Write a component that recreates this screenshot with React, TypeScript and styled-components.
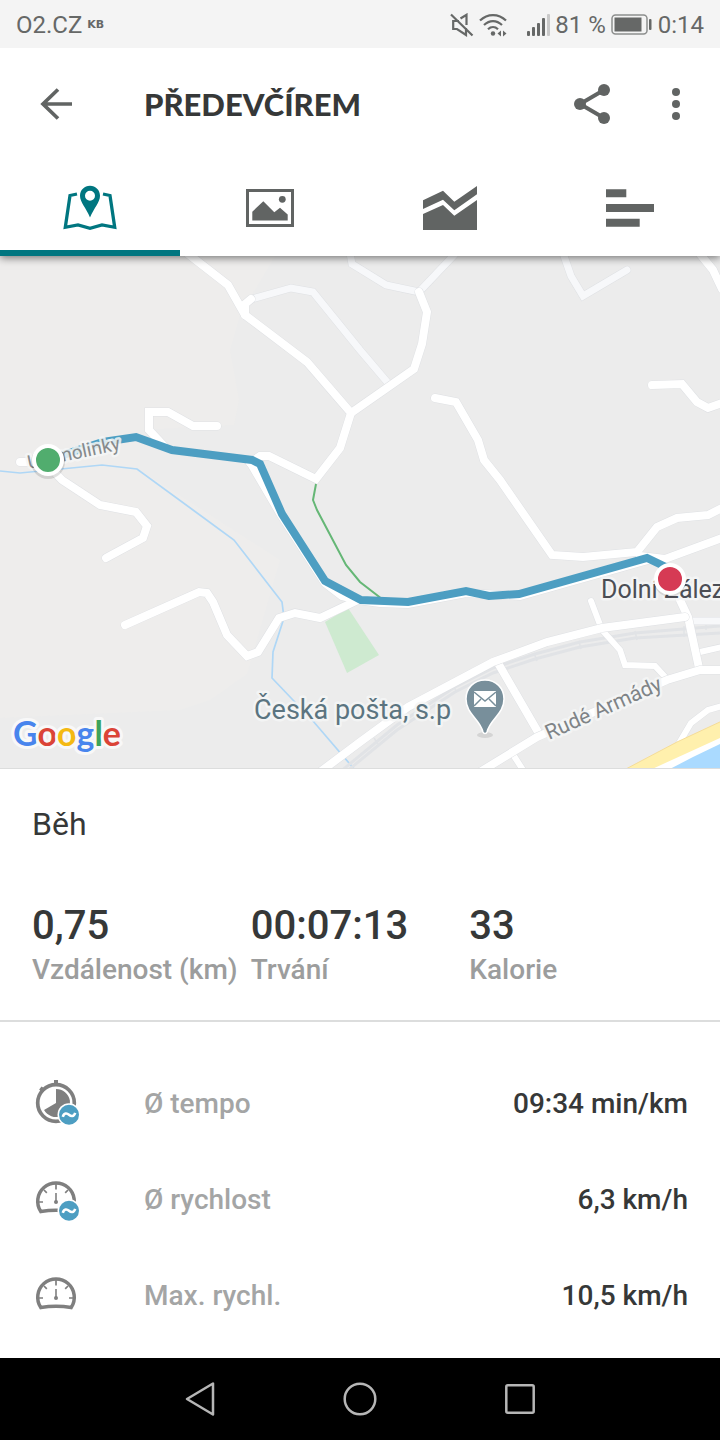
import React from 'react';
import styled, { createGlobalStyle } from 'styled-components';

const color = {
  teal: '#007680',
  icon: '#616463',
  status: '#666867',
  text: '#363838',
  label: '#9c9d9d',
  route: '#4d9ec2',
  rule: '#dcdddd',
};

const GlobalStyle = createGlobalStyle`
  *, *::before, *::after { box-sizing: border-box; }
  body { margin: 0; background: #fff; font-family: Roboto, "Liberation Sans", sans-serif; }
  button { border: 0; padding: 0; background: none; font: inherit; cursor: pointer; }
  svg { display: block; flex: none; }
`;

const Screen = styled.div`
  display: flex;
  flex-direction: column;
  min-height: 100vh;
  color: ${color.text};
`;

const StatusBar = styled.div`
  position: relative;
  z-index: 1;
  display: flex;
  align-items: center;
  justify-content: space-between;
  height: 48px;
  padding: 2px 16px 0;
  background: #f4f4f4;
  color: ${color.status};
  font-size: 24px;
  line-height: 40px;
`;

const StatusGroup = styled.div`
  display: flex;
  align-items: center;
  gap: 5px;
  white-space: nowrap;
`;

const DataUnit = styled.span`
  font: 700 11px/40px "DejaVu Sans", sans-serif;
`;

const Signal = styled.span`
  display: flex;
  padding-left: 14px;
`;

const Top = styled.header`
  position: relative;
  background: #fff;
  box-shadow: 0 2px 8px rgba(0, 0, 0, 0.5);
`;

const Toolbar = styled.div`
  display: flex;
  align-items: center;
  gap: 20px;
  height: 112px;
  padding: 0 12px 0 24px;
`;

const IconButton = styled.button`
  display: flex;
  align-items: center;
  justify-content: center;
  width: 64px;
  height: 64px;
`;

const Title = styled.h1`
  flex: 1;
  margin: 0;
  padding-left: 36px;
  font: 900 31px/40px Lato, sans-serif;
`;

const Tabs = styled.nav`
  display: grid;
  grid-template-columns: repeat(4, 1fr);
`;

const Tab = styled.button<{ $active?: boolean }>`
  display: flex;
  align-items: center;
  justify-content: center;
  height: 96px;
  color: ${(p) => (p.$active ? color.teal : color.icon)};
  box-shadow: ${(p) => (p.$active ? `inset 0 -6px ${color.teal}` : 'none')};
`;

const MapArea = styled.section`
  border-bottom: 1px solid ${color.rule};
`;

const MapCanvas = styled.svg`
  width: 100%;
  height: 512px;
  background: #ececec;
`;

const MapText = styled.text<{ $size: number; $fill: string }>`
  font-family: Roboto, sans-serif;
  font-size: ${(p) => p.$size}px;
  fill: ${(p) => p.$fill};
  stroke: rgba(245, 246, 246, 0.85);
  stroke-width: 5px;
  stroke-linejoin: round;
  paint-order: stroke;
`;

const Wordmark = styled.text`
  font-family: Lato, sans-serif;
  font-size: 34px;
  font-weight: 700;
  stroke: #f8f8f8;
  stroke-width: 6px;
  stroke-linejoin: round;
  paint-order: stroke;
`;

const Summary = styled.section`
  padding: 35px 32px 30px;
  border-bottom: 2px solid ${color.rule};
`;

const Activity = styled.h2`
  margin: 0;
  font-size: 32px;
  line-height: 40px;
  font-weight: 400;
`;

const Stats = styled.dl`
  display: grid;
  grid-template-columns: repeat(3, 1fr);
  margin: 58px 0 0;
`;

const Stat = styled.div`
  display: flex;
  flex-direction: column-reverse;
  font-weight: 500;
  white-space: nowrap;
`;

const StatValue = styled.dd`
  margin: 0;
  font-size: 40px;
  line-height: 48px;
`;

const StatLabel = styled.dt`
  color: ${color.label};
  font-size: 28px;
  line-height: 40px;
`;

const Details = styled.dl`
  flex: 1;
  margin: 0;
  padding: 34px 32px 14px;
`;

const DetailRow = styled.div`
  display: grid;
  grid-template-columns: 112px 1fr auto;
  align-items: center;
  height: 96px;
  font-size: 28px;
  line-height: 40px;
  font-weight: 500;
`;

const DetailLabel = styled.dt`
  color: #a4a5a5;
`;

const DetailValue = styled.dd`
  margin: 0;
`;

const SystemNav = styled.nav`
  display: flex;
  justify-content: center;
  background: #000;
`;

const SystemButton = styled.button`
  display: flex;
  align-items: center;
  justify-content: center;
  width: 160px;
  height: 82px;
`;

const MuteIcon = () => (
  <svg width="24" height="24" viewBox="0 0 24 24" fill="none" stroke="currentColor" strokeWidth="2.2">
    <path d="M1 1.5 22.5 22.5M9 8H3.200v8H7l9 6V15M10.500 5.500 16.500 1.800V12" />
  </svg>
);

const WifiIcon = () => (
  <svg width="28" height="24" viewBox="0 0 28 24" fill="none" stroke="currentColor" strokeWidth="2.2">
    <path d="M1 7.500C8.500 .2 19.500 .2 27 7.500M5 12C10.500 6.700 17.500 6.700 23 12M9 16.200C12 13.400 16 13.400 19 16.200" />
    <circle cx="14" cy="20.500" r="2.200" fill="currentColor" stroke="none" />
    <path d="M18.500 20.500 22 17.500V23.500ZM27.500 20.500 24 17.500V23.500Z" fill="currentColor" stroke="none" />
  </svg>
);

const SignalIcon = () => (
  <svg width="24" height="24" viewBox="0 0 24 24" fill="currentColor">
    <rect x="1" y="18" width="3" height="5" rx="1" />
    <rect x="6" y="14" width="3" height="9" rx="1" />
    <rect x="11" y="10" width="3" height="13" rx="1" />
    <rect x="16" y="5" width="3" height="18" rx="1" />
    <rect x="21" y="1" width="3" height="22" rx="1" opacity=".3" />
  </svg>
);

const BatteryIcon = () => (
  <svg width="42" height="24" viewBox="0 0 42 24">
    <rect x="1" y="2" width="35" height="19" rx="3.500" fill="none" stroke="#8c8e8d" strokeWidth="1.500" />
    <rect x="3.500" y="4.500" width="27" height="14" fill="currentColor" />
    <rect x="38" y="6" width="2.500" height="11" rx="1" fill="currentColor" />
  </svg>
);

const BackIcon = () => (
  <svg width="36" height="36" viewBox="0 0 36 36" fill="none" stroke={color.icon} strokeWidth="3.700">
    <path d="M34 18H5M20 3.500 5 18 20 32.500" />
  </svg>
);

const ShareIcon = () => (
  <svg width="40" height="44" viewBox="0 0 40 44" fill={color.icon}>
    <path d="M32 8 8 22 32 36" fill="none" stroke={color.icon} strokeWidth="4" />
    <circle cx="32" cy="8" r="6" />
    <circle cx="8" cy="22" r="6" />
    <circle cx="32" cy="36" r="6" />
  </svg>
);

const MoreIcon = () => (
  <svg width="8" height="32" viewBox="0 0 8 32" fill={color.icon}>
    <circle cx="4" cy="4" r="4" />
    <circle cx="4" cy="16" r="4" />
    <circle cx="4" cy="28" r="4" />
  </svg>
);

const MapTabIcon = () => (
  <svg width="60" height="56" viewBox="0 0 60 56">
    <path
      d="M17 14 10 15.500 5.300 47.300 18 45 30 48.300 42 45 54.700 47.300 50 15.500 43 14"
      fill="none"
      stroke="currentColor"
      strokeWidth="3.300"
    />
    <path
      d="M30 5.700c-5.700 0-10 4.400-10 10 0 6.500 6 12 10 21.800 4-9.800 10-15.300 10-21.800 0-5.600-4.300-10-10-10Zm0 5a5 5 0 1 1 0 10 5 5 0 0 1 0-10Z"
      fill="currentColor"
      fillRule="evenodd"
    />
  </svg>
);

const PhotoTabIcon = () => (
  <svg width="60" height="56" viewBox="0 0 60 56" fill="currentColor">
    <rect x="7.500" y="10.500" width="45" height="35" fill="none" stroke="currentColor" strokeWidth="3" />
    <path d="M12.300 31.700 23.300 21.200 34.300 32.300 40 27.700 47.700 34.500V40.500H12.300Z" />
    <circle cx="42.300" cy="19.300" r="3.400" />
  </svg>
);

const ChartTabIcon = () => (
  <svg width="60" height="56" viewBox="0 0 60 56" fill="currentColor">
    <path d="M3 20.300 23 10.700 34.300 21.700 57 6V14.300L34.300 30.300 23 19.700 3 29Z" />
    <path d="M3 34 23 25 34.300 35.700 57 20V50H3Z" />
  </svg>
);

const SplitsTabIcon = () => (
  <svg width="60" height="56" viewBox="0 0 60 56" fill="currentColor">
    <path d="M6 9.300H26.300V17.300H6ZM6 24H54V32H6ZM6 38.700H39.700V46.700H6Z" />
  </svg>
);

const AverageBadge = () => (
  <>
    <circle cx="37" cy="34.700" r="11.500" fill="#fff" />
    <circle cx="37" cy="34.700" r="10" fill={color.route} />
    <path d="M30.800 36.800C32 32.500 35 33 37 34.700S41.800 37 43.200 32.800" fill="none" stroke="#fff" strokeWidth="2.600" />
  </>
);

const PaceIcon = () => (
  <svg width="48" height="48" viewBox="0 0 48 48" aria-hidden="true">
    <circle cx="24" cy="23" r="18.300" fill="none" stroke="#7f7f7f" strokeWidth="3.700" />
    <path d="M22 0h4v5h-4ZM7.200 9.500l2.300-3 4 2.500-3.500 4Z" fill="#7f7f7f" />
    <path d="M24 23V9A14 14 0 1 1 12 30Z" fill="#7f7f7f" />
    <AverageBadge />
  </svg>
);

const GaugeIcon = ({ average }: { average?: boolean }) => (
  <svg width="48" height="48" viewBox="0 0 48 48" aria-hidden="true">
    <g fill="none" stroke="#7f7f7f">
      <path d="M8.800 35.500A18.300 18.300 0 1 1 39.200 35.500Q24 33 8.800 35.500Z" strokeWidth="3.500" />
      <path d="M24 8V13.500M6 26H11M42 26H37M12 14 14.800 16.800M36 14 33.200 16.800" strokeWidth="1.700" />
      <path d="M24 17V26" strokeWidth="1.600" />
    </g>
    <circle cx="24" cy="26" r="2" fill="#7f7f7f" />
    {average && <AverageBadge />}
  </svg>
);

const localRoads = [
  'M187 253 228 285 245 315 307 362 351 413 340 448 316 479 269 456H260L250 463',
  'M351 413 414 369 422 344 427 312 419 292',
  'M245 315V304L251 299',
  'M700 254 713 270 722 289',
  'M652 385 682 384 697 402 708 408 722 403',
  'M435 398 456 402 478 440 484 460 500 480 552 555 583 557 637 552 657 527 677 518 708 515 722 508',
  'M640 556 665 559 722 538',
  'M217 426H193L168 412H149V430L164 446',
  'M20 462H45L62 480 100 505 136 512 147 526 143 538 106 558',
  'M125 625 199 592 207 593 213 602 227 635 247 656 258 652 279 618 295 613 320 618 358 600 380 603 408 604 466 593 520 596 648 560',
  'M250 462 281 515 325 583 342 596 358 600',
  'M680 600 688 617 699 668',
  'M498 663 538 732',
];
const paleRoads = [
  'M246 303 252 299 291 288 313 292 360 350 388 383',
  'M350 253 352 264 386 285 419 292 455 254',
  'M563 253 571 276 583 296 627 270',
  'M690 621H722',
];
const mainRoads = [
  'M320 772 360 742 408 707 493 662 547 642 602 628 685 617',
  'M480 772 537 737 667 680 700 670H722',
];
const laneRoads = [
  'M591 601 602 630 620 650 625 665 655 666 668 680',
  'M700 652 722 647',
  'M678 745 691 723 708 710 722 706',
  'M512 753 523 770',
];

const Roads = ({ paths, width, fill = '#fff' }: { paths: string[]; width: number; fill?: string }) => (
  <g fill="none" strokeLinecap="round">
    {paths.map((d) => (
      <path key={`edge ${d}`} d={d} stroke="#dfe1e4" strokeWidth={width + 1} />
    ))}
    {paths.map((d) => (
      <path key={d} d={d} stroke={fill} strokeWidth={width} />
    ))}
  </g>
);

const RouteMap = () => (
  <MapCanvas viewBox="0 256 720 512" preserveAspectRatio="xMidYMid slice" role="img" aria-label="Mapa trasy">
    <path d="M0 256H275L240 315 230 350 239 400 234 425 140 430V470L280 560 247 674 210 700 180 710 0 718Z" fill="#eeedec" />
    <path d="M348 608 325 622 347 673 379 655Z" fill="#ceead0" />
    <g fill="none" stroke="#afd7f6" strokeWidth="1.700">
      <path d="M0 471 20 473 102 465 137 469 193 510 234 540 282 602 284 618 273 652 272 678 313 721 355 770" />
    </g>
    <g fill="none" stroke="#e1e3e6" strokeWidth="3">
      <path d="M340 772 397 725 455 687 493 668 535 654 580 642 635 633 720 626" />
      <path d="M346 772 397 730 455 692 493 673 535 659 580 647 635 638 720 633" />
      <path d="M374 738 378 744M453 686 457 692M534 653 537 661M579 641 581 649M635 631 637 640M684 626V637M706 625V630" strokeWidth="1.500" />
    </g>
    <Roads paths={paleRoads} width={7} fill="#f7f8fa" />
    <Roads paths={laneRoads} width={6} />
    <Roads paths={localRoads} width={8} />
    <Roads paths={mainRoads} width={8} />
    <path d="M624 770 677 742 722 721V742L690 756 662 770Z" fill="#fff0ad" stroke="#f5dc98" strokeWidth="1" />
    <path d="M650 770 722 737V745L672 770Z" fill="#fff" />
    <path d="M668 770 693 757 722 743V770Z" fill="#aadaff" />
    <path d="M316 484 313 500 317 510 346 565 360 582 382 599" fill="none" stroke="#65b776" strokeWidth="2" />
    <path
      d="M48 460 103 442 136 437 172 450 252 460 260 464 282 514 325 581 361 600 408 602 466 591 489 596 519 594 647 558 670 569"
      fill="none"
      stroke={color.route}
      strokeWidth="8"
    />
    <MapText $size={19} $fill="#858a8c" transform="translate(29 469) rotate(-12)">
      U Smolinky
    </MapText>
    <MapText $size={27} $fill="#5b7480" x="254" y="719">Česká pošta, s.p</MapText>
    <MapText $size={25} $fill="#4b4e55" x="601" y="598">Dolní Zález</MapText>
    <MapText $size={21} $fill="#7f8487" transform="translate(549 740) rotate(-24)">Rudé Armády</MapText>
    <ellipse cx="485" cy="735" rx="8" ry="3" fill="#000" opacity=".1" />
    <path
      d="M485 680c-11 0-19 8-19 19 0 15 14 20 17 33 .6 2 3.400 2 4 0 3-13 17-18 17-33 0-11-8-19-19-19Z"
      fill="#788f9b"
      stroke="#fff"
      strokeWidth="1.500"
    />
    <rect x="474" y="691" width="22" height="16" fill="#fff" />
    <path d="M474 692 485 701 496 692M474 706 481 699M496 706 489 699" fill="none" stroke="#788f9b" strokeWidth="1.500" />
    <circle cx="48" cy="462" r="17" fill="#000" opacity=".12" />
    <circle cx="48" cy="460" r="14" fill="#51ad6e" stroke="#fff" strokeWidth="4" />
    <circle cx="670" cy="581" r="16" fill="#000" opacity=".1" />
    <circle cx="670" cy="579" r="14" fill="#d63a54" stroke="#fff" strokeWidth="4" />
    <Wordmark x="13" y="746">
      <tspan fill="#4885ed">G</tspan>
      <tspan fill="#db4437">o</tspan>
      <tspan fill="#f4b913">o</tspan>
      <tspan fill="#4885ed">g</tspan>
      <tspan fill="#3da35a">l</tspan>
      <tspan fill="#db4437">e</tspan>
    </Wordmark>
  </MapCanvas>
);

const stats = [
  { label: 'Vzdálenost (km)', value: '0,75' },
  { label: 'Trvání', value: '00:07:13' },
  { label: 'Kalorie', value: '33' },
];

const details = [
  { label: 'Ø tempo', value: '09:34 min/km', icon: <PaceIcon /> },
  { label: 'Ø rychlost', value: '6,3 km/h', icon: <GaugeIcon average /> },
  { label: 'Max. rychl.', value: '10,5 km/h', icon: <GaugeIcon /> },
];

export default function App() {
  return (
    <Screen>
      <GlobalStyle />
      <StatusBar>
        <StatusGroup>
          <span>O2.CZ</span>
          <DataUnit>KB</DataUnit>
        </StatusGroup>
        <StatusGroup>
          <MuteIcon />
          <WifiIcon />
          <Signal><SignalIcon /></Signal>
          <span>81 %</span>
          <BatteryIcon />
          <span>0:14</span>
        </StatusGroup>
      </StatusBar>

      <Top>
        <Toolbar>
          <IconButton aria-label="Zpět"><BackIcon /></IconButton>
          <Title>PŘEDEVČÍREM</Title>
          <IconButton aria-label="Sdílet"><ShareIcon /></IconButton>
          <IconButton aria-label="Další možnosti"><MoreIcon /></IconButton>
        </Toolbar>
        <Tabs>
          <Tab $active aria-label="Mapa" aria-current="page"><MapTabIcon /></Tab>
          <Tab aria-label="Fotky"><PhotoTabIcon /></Tab>
          <Tab aria-label="Grafy"><ChartTabIcon /></Tab>
          <Tab aria-label="Mezičasy"><SplitsTabIcon /></Tab>
        </Tabs>
      </Top>

      <MapArea>
        <RouteMap />
      </MapArea>

      <Summary>
        <Activity>Běh</Activity>
        <Stats>
          {stats.map((s) => (
            <Stat key={s.label}>
              <StatLabel>{s.label}</StatLabel>
              <StatValue>{s.value}</StatValue>
            </Stat>
          ))}
        </Stats>
      </Summary>

      <Details>
        {details.map((d) => (
          <DetailRow key={d.label}>
            {d.icon}
            <DetailLabel>{d.label}</DetailLabel>
            <DetailValue>{d.value}</DetailValue>
          </DetailRow>
        ))}
      </Details>

      <SystemNav>
        <SystemButton aria-label="Zpět">
          <svg width="32" height="36" viewBox="0 0 32 36" fill="none" stroke="#b6b6b6" strokeWidth="2.500" strokeLinejoin="round">
            <path d="M29 2.500V33.500L3 18Z" />
          </svg>
        </SystemButton>
        <SystemButton aria-label="Domů">
          <svg width="34" height="34" viewBox="0 0 34 34" fill="none" stroke="#b6b6b6" strokeWidth="2.500">
            <circle cx="17" cy="17" r="15.300" />
          </svg>
        </SystemButton>
        <SystemButton aria-label="Přehled">
          <svg width="30" height="30" viewBox="0 0 30 30" fill="none" stroke="#b6b6b6" strokeWidth="2.500">
            <rect x="1.300" y="1.300" width="27.400" height="27.400" rx="1.500" />
          </svg>
        </SystemButton>
      </SystemNav>
    </Screen>
  );
}
